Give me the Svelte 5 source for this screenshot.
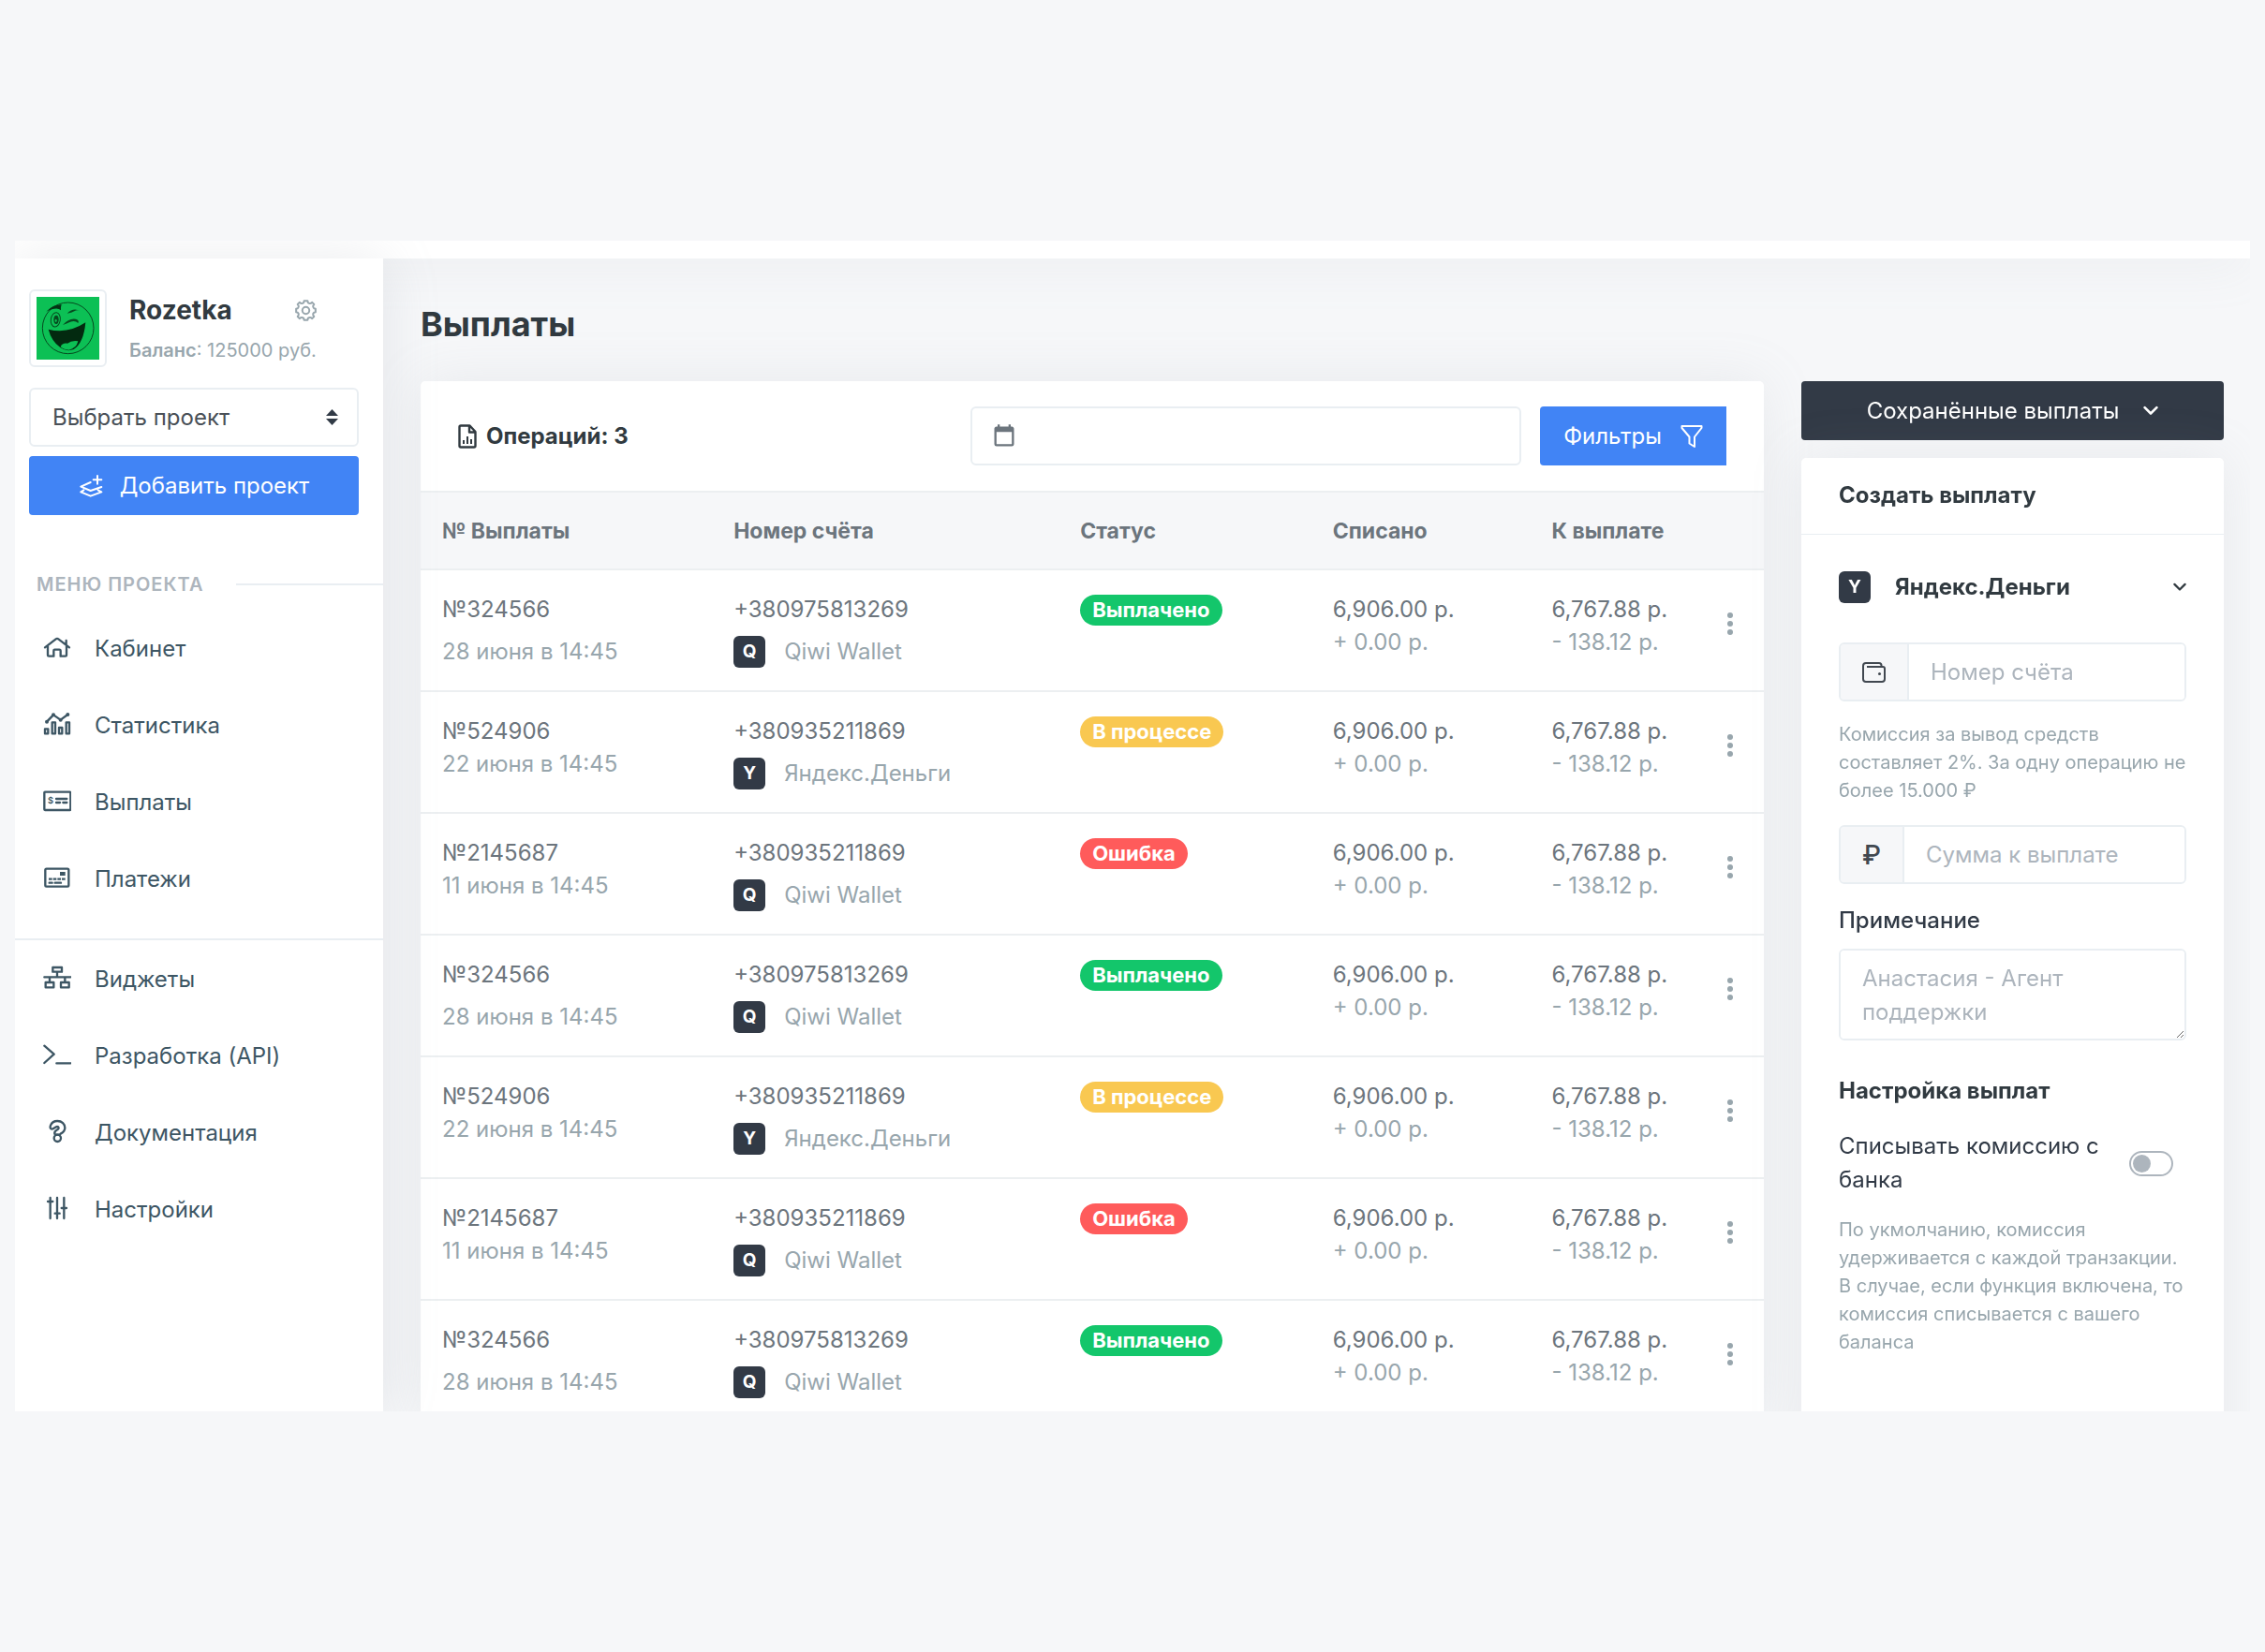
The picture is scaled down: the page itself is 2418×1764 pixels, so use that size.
<script lang="ts">
  const projectMenu = [
    { icon: "home", title: "Кабинет" },
    { icon: "stats", title: "Статистика" },
    { icon: "payout", title: "Выплаты" },
    { icon: "card", title: "Платежи" },
  ];
  const toolsMenu = [
    { icon: "widgets", title: "Виджеты" },
    { icon: "api", title: "Разработка (API)" },
    { icon: "docs", title: "Документация" },
    { icon: "settings", title: "Настройки" },
  ];

  const paid = {
    id: "324566",
    date: "28 июня в 14:45",
    spaced: true,
    phone: "+380975813269",
    wallet: "Qiwi Wallet",
    letter: "Q",
    status: "Выплачено",
    kind: "success",
  };
  const pending = {
    id: "524906",
    date: "22 июня в 14:45",
    spaced: false,
    phone: "+380935211869",
    wallet: "Яндекс.Деньги",
    letter: "Y",
    status: "В процессе",
    kind: "warning",
  };
  const failed = {
    id: "2145687",
    date: "11 июня в 14:45",
    spaced: false,
    phone: "+380935211869",
    wallet: "Qiwi Wallet",
    letter: "Q",
    status: "Ошибка",
    kind: "danger",
  };
  const payouts = [paid, pending, failed, paid, pending, failed, paid];

  let fromBank = $state(false);
</script>

{#snippet menuIcon(name: string)}
  <svg class="menu-icon" viewBox="0 0 90 78" aria-hidden="true">
    {#if name === "home"}
      <path d="M6 40 L41 13 Q45 10 49 13 L84 40 M15 34 V64 Q15 68 19 68 H34 V50 Q34 47 37 47 H52 Q56 47 56 50 V68 H71 Q75 68 75 64 V34 M74 18 V30" />
    {:else if name === "stats"}
      <path d="M12 32 L33 10 L56 26 L79 9" />
      <circle class="fill" cx="12" cy="32" r="6" />
      <circle class="fill" cx="33" cy="10" r="6" />
      <circle class="fill" cx="56" cy="26" r="6" />
      <circle class="fill" cx="79" cy="9" r="6" />
      <path d="M6 55 h10 v15 h-10z M29 34 h10 v36 h-10z M51 51 h10 v19 h-10z M74 34 h10 v36 h-10z" />
    {:else if name === "payout"}
      <rect x="4" y="11" width="84" height="58" rx="2" />
      <text x="15" y="49" font-size="28">$</text>
      <path d="M42 33 H76 M42 45 H54 M64 45 H76" />
    {:else if name === "card"}
      <rect x="7" y="11" width="75" height="57" rx="4" />
      <rect class="fill" x="54" y="21" width="17" height="12" />
      <path class="dashes" d="M18 44 H72" />
      <path d="M20 56 H29 M38 56 H57" />
    {:else if name === "widgets"}
      <path d="M31 6 h29 v14 h-29z M45 20 V37 M4 37 H88 M21 37 V54 M70 37 V54 M8 54 h26 v16 h-26z M57 54 h26 v16 h-26z" />
    {:else if name === "api"}
      <path d="M4 11 L35 38 L4 66 M43 67 H88" />
    {:else if name === "docs"}
      <path d="M28 32 C22 31 22 25 24 20 C28 10 36 6 46 6 C60 6 70 15 70 28 C70 38 64 43 56 47 C54 51 38 51 37 47 C35 38 41 36 47 33 C52 30 50 24 45 24 C38 24 37 32 28 32Z" />
      <circle cx="46" cy="61" r="11" />
    {:else}
      <path d="M23 6 V72 M45 6 V72 M67 6 V72 M15 18 H31 M38 56 H53 M59 39 H75" />
    {/if}
  </svg>
{/snippet}

{#snippet chevron(width: number)}
  <svg {width} viewBox="0 0 15 10" aria-hidden="true">
    <path d="M1.5 2 L7.5 8 L13.5 2" fill="none" stroke="currentColor" stroke-width="2.4" stroke-linecap="round" stroke-linejoin="round" />
  </svg>
{/snippet}

<div class="shell">
  <header class="topbar"></header>
  <div class="body">
    <aside class="sidebar">
      <div class="project">
        <div class="avatar">
          <svg viewBox="0 0 201 201" role="img" aria-label="Rozetka">
            <rect width="201" height="201" fill="#0cc055" />
            <circle cx="101" cy="100" r="82" fill="none" stroke="#064a1f" stroke-width="3" />
            <path fill="#043314" d="M31 47 Q54 24 80 25 Q77 32 78 43 Q66 30 31 47Z" />
            <path fill="#064a1f" d="M98 53 Q118 33 139 45 Q130 40 121 46 Q113 51 98 53Z" />
            <path fill="#064a1f" d="M84 90 Q104 67 126 71 Q138 75 133 84 Q124 74 108 80 Q96 86 84 90Z" />
            <ellipse cx="61" cy="73" rx="15" ry="23" fill="none" stroke="#064a1f" stroke-width="3" transform="rotate(8 61 73)" />
            <ellipse cx="63" cy="73" rx="8" ry="14" fill="#064a1f" />
            <ellipse cx="62" cy="76" rx="3" ry="5" fill="#0cc055" />
            <path fill="#032a10" d="M38 104 Q100 120 157 82 Q151 148 119 168 Q96 177 76 162 Q48 142 38 104Z" />
            <path fill="#0cc055" d="M77 160 Q82 147 99 149 Q112 139 133 142 Q128 165 104 170 Q88 170 77 160Z" />
          </svg>
        </div>
        <div class="about">
          <div class="name">
            <h2>Rozetka</h2>
            <button class="gear" aria-label="Настройки проекта">
              <svg viewBox="0 0 16 16" width="23" height="23" fill="none" stroke="currentColor" stroke-width="1.4">
                <circle cx="8" cy="8" r="2.6" />
                <path d="M6.4 2.2 L6.7 .8 H9.3 L9.6 2.2 Q10.6 3 11.7 2.7 L12.7 2 L14.1 3.4 L13.4 4.6 Q13.1 5.8 14 6.4 L15.2 6.7 V9.3 L14 9.6 Q13.1 10.2 13.4 11.4 L14.1 12.6 L12.7 14 L11.7 13.3 Q10.6 13 9.6 13.8 L9.3 15.2 H6.7 L6.4 13.8 Q5.4 13 4.3 13.3 L3.3 14 L1.9 12.6 L2.6 11.4 Q2.9 10.2 2 9.6 L.8 9.3 V6.7 L2 6.4 Q2.9 5.8 2.6 4.6 L1.9 3.4 L3.3 2 L4.3 2.7 Q5.4 3 6.4 2.2Z" stroke-linejoin="round" />
              </svg>
            </button>
          </div>
          <p class="balance"><b>Баланс</b>: 125000 руб.</p>
        </div>
      </div>

      <div class="select">
        <select aria-label="Проект">
          <option>Выбрать проект</option>
        </select>
        <svg viewBox="0 0 13 17" width="13" height="17" aria-hidden="true">
          <path d="M6.5 0 L13 7 H0Z M6.5 17 L0 10 H13Z" />
        </svg>
      </div>
      <button class="btn add">
        <svg viewBox="0 0 78 78" width="26" height="26" fill="none" stroke="currentColor" stroke-width="6" stroke-linecap="round" stroke-linejoin="round">
          <path d="M38 27 L7 41 L38 54 L73 42 M16 52 L7 58 L38 71 L73 58 L62 52 M60 6 V32 M47 19 H73" />
        </svg>
        Добавить проект
      </button>

      <div class="menu-title">Меню проекта</div>
      <nav>
        {#each projectMenu as item}
          <a href="#{item.icon}">{@render menuIcon(item.icon)}{item.title}</a>
        {/each}
      </nav>
      <nav class="tools">
        {#each toolsMenu as item}
          <a href="#{item.icon}">{@render menuIcon(item.icon)}{item.title}</a>
        {/each}
      </nav>
    </aside>

    <main>
      <h1>Выплаты</h1>
      <div class="columns">
        <section class="card list">
          <div class="list-head">
            <h3>
              <svg viewBox="0 0 20 26" width="20" height="26" fill="none" stroke="currentColor" stroke-width="2.4" stroke-linejoin="round">
                <path d="M3 1.5 H12.5 L18.5 8 V23 Q18.5 24.5 17 24.5 H3 Q1.5 24.5 1.5 23 V3 Q1.5 1.5 3 1.5Z M12 2 V8.5 H18.5" />
                <path stroke-width="2" d="M6 17 V21 M10 13 V21 M14 16 V21" />
              </svg>
              Операций: 3
            </h3>
            <label class="date">
              <svg viewBox="0 0 24 24" width="28" height="28" fill="currentColor" aria-hidden="true">
                <path d="M19 19H5V8H19M16 1V3H8V1H6V3H5C3.9 3 3 3.9 3 5V19A2 2 0 0 0 5 21H19A2 2 0 0 0 21 19V5C21 3.9 20.1 3 19 3H18V1" />
              </svg>
              <input type="text" aria-label="Период" />
            </label>
            <button class="btn filter">
              Фильтры
              <svg viewBox="0 0 24 26" width="24" height="26" fill="none" stroke="currentColor" stroke-width="2" stroke-linejoin="round">
                <path d="M1.5 2 H22.5 V4 L15 13.5 V24 L9.5 20.5 V13.5 L1.5 4Z" />
              </svg>
            </button>
          </div>
          <table>
            <colgroup>
              <col class="c-id" />
              <col class="c-account" />
              <col class="c-status" />
              <col class="c-debit" />
              <col class="c-sum" />
              <col />
            </colgroup>
            <thead>
              <tr>
                <th scope="col">№ Выплаты</th>
                <th scope="col">Номер счёта</th>
                <th scope="col">Статус</th>
                <th scope="col">Списано</th>
                <th scope="col">К выплате</th>
                <th></th>
              </tr>
            </thead>
            <tbody>
              {#each payouts as p}
                <tr>
                  <td>
                    <div>№{p.id}</div>
                    <div class="muted" class:spaced={p.spaced}>{p.date}</div>
                  </td>
                  <td>
                    <div>{p.phone}</div>
                    <div class="wallet muted"><span class="letter">{p.letter}</span>{p.wallet}</div>
                  </td>
                  <td><span class="badge {p.kind}">{p.status}</span></td>
                  <td>
                    <div>6,906.00 р.</div>
                    <div class="muted">+ 0.00 р.</div>
                  </td>
                  <td>
                    <div>6,767.88 р.</div>
                    <div class="muted">- 138.12 р.</div>
                  </td>
                  <td class="more">
                    <button aria-label="Действия">
                      <svg viewBox="0 0 6 24" width="6" height="24" fill="currentColor">
                        <circle cx="3" cy="3" r="3" />
                        <circle cx="3" cy="12" r="3" />
                        <circle cx="3" cy="21" r="3" />
                      </svg>
                    </button>
                  </td>
                </tr>
              {/each}
            </tbody>
          </table>
        </section>

        <div class="side">
          <button class="btn saved">Сохранённые выплаты {@render chevron(16)}</button>
          <section class="card create">
            <h3>Создать выплату</h3>
            <form>
              <button type="button" class="system">
                <span class="letter">Y</span>
                Яндекс.Деньги
                {@render chevron(14)}
              </button>
              <div class="group">
                <label class="prefix" for="account" aria-label="Номер счёта">
                  <svg viewBox="0 0 25 22" width="25" height="22" fill="none" stroke="currentColor" stroke-width="2" stroke-linejoin="round">
                    <path d="M20.5 5.5 V3.5 Q20.5 1 18 1 H4 Q1 1 1 4 V18 Q1 21 4 21 H21 Q24 21 24 18 V7 Q24 5 22 5 H5" />
                    <circle cx="18.5" cy="12.5" r="1.5" fill="currentColor" stroke="none" />
                  </svg>
                </label>
                <input id="account" type="text" placeholder="Номер счёта" />
              </div>
              <p class="hint">Комиссия за вывод средств составляет 2%. За одну операцию не более 15.000 ₽</p>
              <div class="group">
                <label class="prefix rub" for="sum" aria-label="Сумма к выплате">₽</label>
                <input id="sum" type="text" placeholder="Сумма к выплате" />
              </div>
              <label class="note" for="note">Примечание</label>
              <textarea id="note" rows="2" placeholder="Анастасия - Агент поддержки"></textarea>
              <h3>Настройка выплат</h3>
              <div class="switch">
                <label for="bank">Списывать комиссию с банка</label>
                <input id="bank" type="checkbox" bind:checked={fromBank} />
              </div>
              <p class="hint">
                По укмолчанию, комиссия удерживается с каждой транзакции. В случае, если функция
                включена, то комиссия списывается с вашего баланса
              </p>
            </form>
          </section>
        </div>
      </div>
    </main>
  </div>
</div>

<style>
  :global(body) {
    background: #f6f7f9;
  }

  .shell {
    --line: #e9eef2;
    --dark: #323a46;
    --muted: #98a6ad;
    box-sizing: border-box;
    display: flex;
    flex-direction: column;
    height: calc(100vh - 514px);
    margin: 257px 16px;
    overflow: hidden;
    color: #6c757d;
    font: 24px/36px Inter, "Liberation Sans", sans-serif;
  }
  .shell :global(*) {
    box-sizing: border-box;
  }
  h1,
  h2,
  h3,
  p {
    margin: 0;
  }
  h1,
  h2,
  h3 {
    color: #313a40;
    font-weight: 700;
  }
  h3 {
    font-size: 24px;
  }
  button,
  input,
  select,
  textarea {
    font: inherit;
  }
  button {
    padding: 0;
    border: 0;
    background: none;
    color: inherit;
  }
  svg {
    flex: none;
  }

  .topbar {
    flex: none;
    height: 19px;
    background: #fff;
    box-shadow: 0 0 56px rgba(154, 161, 171, 0.2);
    z-index: 1;
  }
  .body {
    display: flex;
    flex: 1;
    min-height: 0;
  }

  .sidebar {
    flex: none;
    width: 393px;
    padding-top: 33px;
    background: #fff;
    box-shadow: 0 0 56px rgba(154, 161, 171, 0.2);
    z-index: 2;
  }
  .project {
    display: flex;
    gap: 24px;
    margin: 0 15px 22px;
  }
  .avatar {
    display: flex;
    width: 83px;
    height: 83px;
    padding: 6px;
    border: 2px solid var(--line);
    border-radius: 6px;
  }
  .name {
    display: flex;
    align-items: center;
    justify-content: space-between;
    height: 44px;
  }
  .name h2 {
    font-size: 28px;
  }
  .gear {
    display: flex;
    color: var(--muted);
  }
  .balance {
    margin-top: 3px;
    color: var(--muted);
    font-size: 20px;
  }
  .balance b {
    font-weight: 600;
  }
  .select {
    position: relative;
    margin: 0 26px 10px 15px;
  }
  .select select {
    appearance: none;
    display: block;
    width: 100%;
    height: 63px;
    padding: 0 23px;
    border: 2px solid var(--line);
    border-radius: 6px;
    background: #fff;
    color: #495057;
  }
  .select svg {
    position: absolute;
    top: 23px;
    right: 22px;
    fill: #313a46;
    pointer-events: none;
  }
  .btn {
    display: flex;
    align-items: center;
    justify-content: center;
    height: 63px;
    border-radius: 4px;
    background: #4184f5;
    color: #fff;
  }
  .add {
    gap: 18px;
    width: 352px;
    margin: 0 15px;
  }
  .menu-title {
    display: flex;
    align-items: center;
    gap: 34px;
    margin: 56px 0 9px 23px;
    color: #adb5bd;
    font-size: 20px;
    font-weight: 600;
    letter-spacing: 1px;
    text-transform: uppercase;
  }
  .menu-title::after {
    content: "";
    flex: 1;
    height: 2px;
    background: var(--line);
  }
  .sidebar nav {
    padding: 1px 0 22px;
  }
  .sidebar a {
    display: flex;
    align-items: center;
    gap: 25px;
    height: 82px;
    padding-left: 30px;
    color: #3d5664;
    text-decoration: none;
  }
  .tools {
    border-top: 2px solid var(--line);
  }
  .menu-icon {
    width: 30px;
    height: 26px;
    margin-bottom: 4px;
    fill: none;
    stroke: currentColor;
    stroke-width: 7;
    stroke-linecap: round;
    stroke-linejoin: round;
  }
  .menu-icon .fill,
  .menu-icon text {
    fill: currentColor;
    stroke: none;
    font-weight: 600;
  }
  .menu-icon .dashes {
    stroke-linecap: butt;
    stroke-dasharray: 11 3;
  }

  main {
    flex: 1;
    min-width: 0;
    padding: 0 28px 0 40px;
  }
  h1 {
    padding: 45px 0 35px;
    font-size: 36px;
    line-height: 51px;
  }
  .columns {
    display: flex;
    align-items: flex-start;
    gap: 40px;
  }
  .card {
    border-radius: 5px;
    background: #fff;
    box-shadow: 0 0 56px rgba(154, 161, 171, 0.15);
  }
  .list {
    flex: 1;
  }
  .list-head {
    display: flex;
    align-items: center;
    padding: 27px 40px;
  }
  .list-head h3 {
    display: flex;
    align-items: center;
    gap: 10px;
    margin-right: auto;
  }
  .date {
    display: flex;
    align-items: center;
    width: 43.4%;
    height: 63px;
    margin-right: 20px;
    padding-left: 20px;
    border: 2px solid var(--line);
    border-radius: 6px;
  }
  .date input {
    flex: 1;
    border: 0;
    outline: 0;
  }
  .filter {
    gap: 20px;
    width: 199px;
    border-radius: 4px 0 0 4px;
  }

  table {
    width: 100%;
    border-collapse: collapse;
    table-layout: fixed;
    line-height: 35px;
  }
  .c-id {
    width: 21.7%;
  }
  .c-account {
    width: 25.8%;
  }
  .c-status {
    width: 18.8%;
  }
  .c-debit {
    width: 16.3%;
  }
  .c-sum {
    width: 12.4%;
  }
  th,
  td {
    padding: 24px 0 23px 23px;
    border-top: 2px solid #eceff1;
    text-align: left;
    vertical-align: top;
    white-space: nowrap;
  }
  th {
    padding-bottom: 22px;
    background: #f6f7f9;
    font-size: 23px;
    font-weight: 700;
  }
  .muted {
    color: var(--muted);
  }
  .spaced {
    margin-top: 10px;
  }
  .wallet {
    display: flex;
    align-items: center;
    gap: 20px;
    height: 46px;
    padding-top: 9px;
  }
  .letter {
    width: 34px;
    height: 34px;
    border-radius: 6px;
    background: var(--dark);
    color: #fff;
    font-size: 19px;
    font-weight: 700;
    line-height: 34px;
    text-align: center;
  }
  .badge {
    display: inline-block;
    height: 33px;
    padding: 0 13px;
    border-radius: 17px;
    color: #fff;
    font-size: 22px;
    font-weight: 700;
    line-height: 33px;
  }
  .success {
    background: #13c66b;
  }
  .warning {
    background: #f9c851;
  }
  .danger {
    background: #ff5b5b;
  }
  .more {
    padding: 45px 0 0 33px;
    color: var(--muted);
  }
  .more button {
    display: flex;
  }

  .side {
    flex: none;
    width: 451px;
  }
  .saved {
    gap: 26px;
    width: 100%;
    margin-bottom: 19px;
    background: var(--dark);
  }
  .create {
    height: 100vh;
  }
  .create > h3 {
    padding: 22px 40px 23px;
    border-bottom: 1px solid var(--line);
  }
  form {
    padding: 38px 40px;
  }
  .system {
    display: flex;
    align-items: center;
    width: 100%;
    margin-bottom: 41px;
    color: #313a40;
    font-weight: 700;
  }
  .system .letter {
    margin-right: 26px;
  }
  .system svg {
    margin-left: auto;
  }
  .group {
    display: flex;
    height: 63px;
    border: 2px solid var(--line);
    border-radius: 6px;
    overflow: hidden;
  }
  .prefix {
    display: flex;
    align-items: center;
    padding: 0 23px;
    border-right: 2px solid var(--line);
    background: #f6f7f9;
    color: #414850;
  }
  .rub {
    font-size: 28px;
    font-weight: 500;
  }
  .group input {
    flex: 1;
    min-width: 0;
    padding: 0 23px;
    border: 0;
  }
  ::placeholder {
    color: #adb5bd;
    opacity: 1;
  }
  .hint {
    margin: 20px 0 22px;
    color: var(--muted);
    font-size: 20px;
    line-height: 30px;
  }
  .note {
    display: block;
    margin: 21px 0 12px;
    color: #313a46;
    font-weight: 500;
  }
  textarea {
    display: block;
    width: 100%;
    height: 98px;
    padding: 12px 23px;
    border: 2px solid var(--line);
    border-radius: 6px;
  }
  form h3 {
    margin: 36px 0 23px;
  }
  .switch {
    display: flex;
    align-items: center;
    gap: 24px;
    padding-right: 14px;
    color: #313a46;
  }
  .switch label {
    flex: 1;
  }
  .switch input {
    appearance: none;
    width: 47px;
    height: 27px;
    margin: 0;
    padding: 2px;
    border: 2px solid #adb5bd;
    border-radius: 14px;
  }
  .switch input::before {
    content: "";
    display: block;
    width: 19px;
    height: 19px;
    border-radius: 50%;
    background: #adb5bd;
  }
  .switch input:checked::before {
    margin-left: auto;
  }
</style>
